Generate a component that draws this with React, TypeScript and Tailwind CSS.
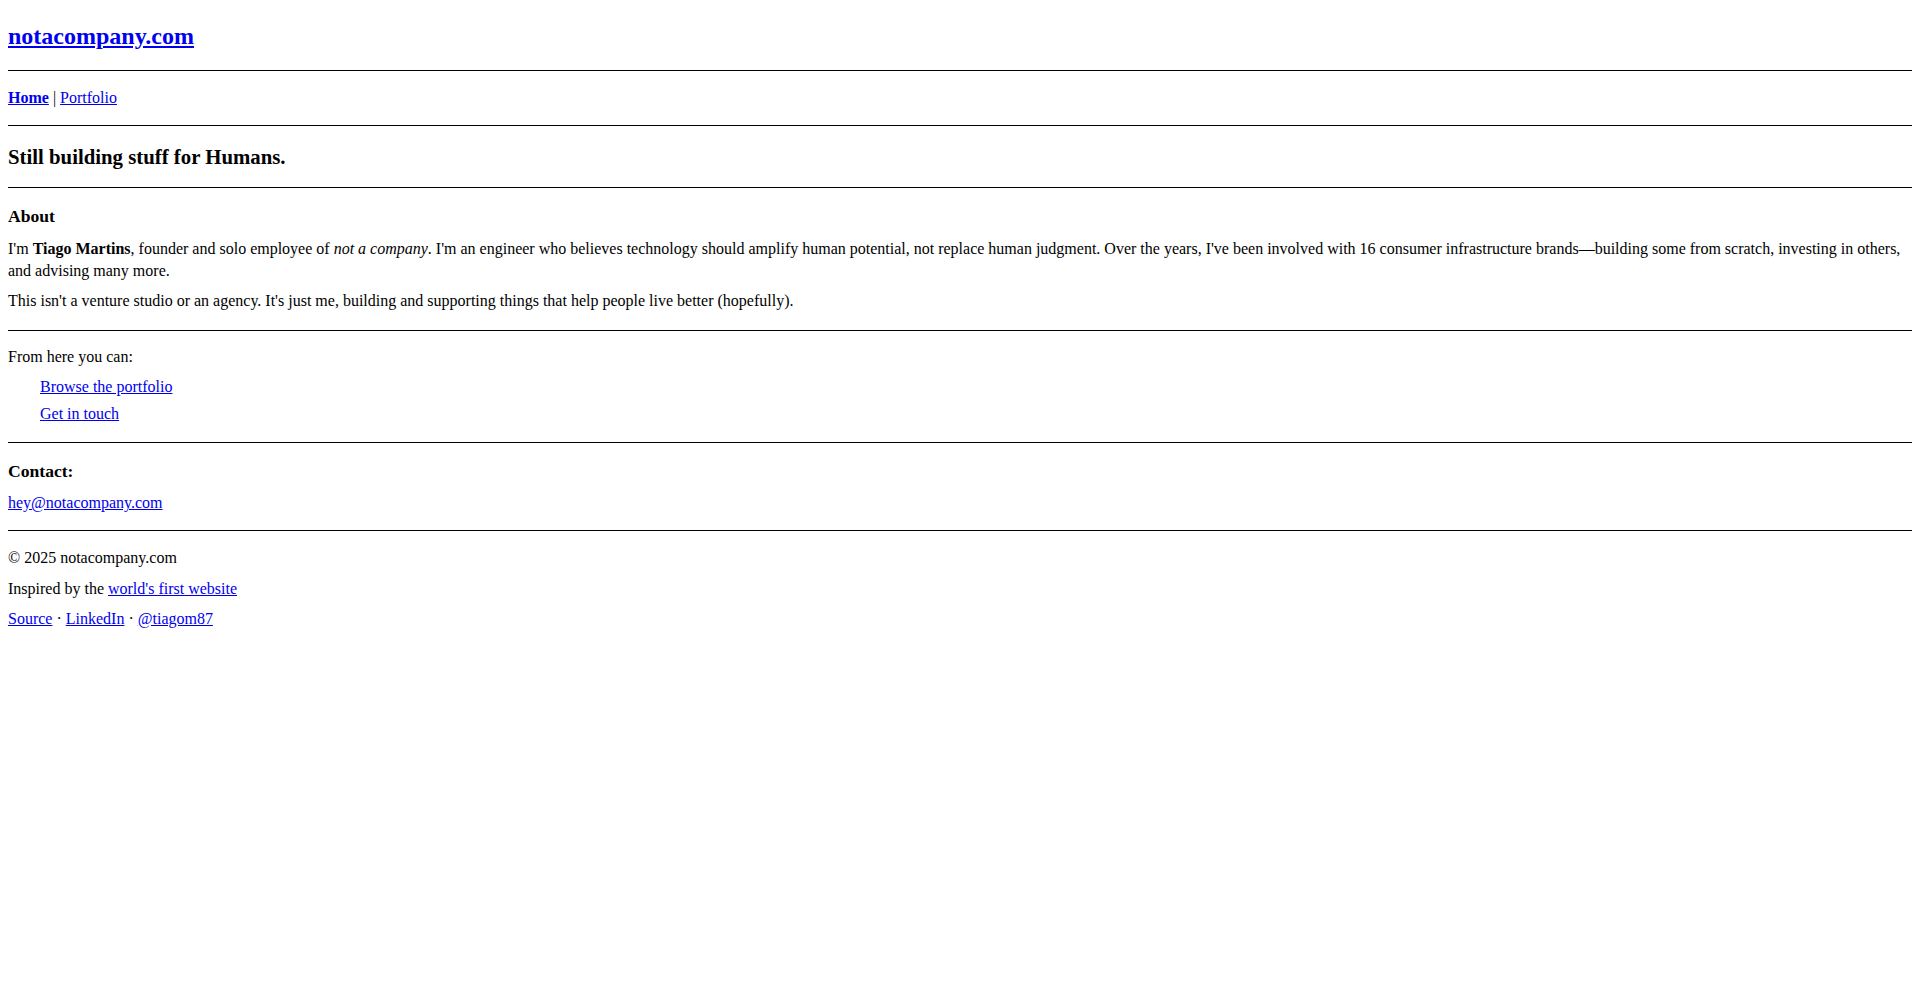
const link = 'text-[#0000ee] underline';

function Rule({ className = '' }: { className?: string }) {
  return <hr className={`border-0 border-t border-black ${className}`} />;
}

export default function App() {
  return (
    <div className="min-h-[993px] bg-white px-2 text-black font-['Liberation_Serif',serif] text-[16px]">
      <div className="pt-[20px]">
        <h1 className="text-[24px] leading-[32px] font-bold">
          <a href="#" className={link}>notacompany.com</a>
        </h1>
      </div>
      <Rule className="mt-[18px]" />

      <nav className="mt-[15px] leading-[24px]">
        <a href="#" className={`${link} font-bold`}>Home</a> | <a href="#" className={link}>Portfolio</a>
      </nav>
      <Rule className="mt-[15px]" />

      <h2 className="mt-[17px] text-[20.8px] leading-[28px] font-bold">Still building stuff for Humans.</h2>
      <Rule className="mt-[16px]" />

      <section>
        <h3 className="mt-[16px] text-[17.6px] leading-[24px] font-bold">About</h3>
        <p className="mt-[10px] leading-[22px]">
          I'm <strong>Tiago Martins</strong>, founder and solo employee of <em>not a company</em>. I'm an engineer who
          believes technology should amplify human potential, not replace human judgment. Over the years, I've been
          involved with 16 consumer infrastructure brands—building some from scratch, investing in others, and advising
          many more.
        </p>
        <p className="mt-[8px] leading-[22px]">
          This isn't a venture studio or an agency. It's just me, building and supporting things that help people live
          better (hopefully).
        </p>
      </section>
      <Rule className="mt-[18px]" />

      <p className="mt-[14px] leading-[24px]">From here you can:</p>
      <ul className="pl-8 leading-[24px]">
        <li className="mt-[6px]"><a href="#" className={link}>Browse the portfolio</a></li>
        <li className="mt-[3px]"><a href="#" className={link}>Get in touch</a></li>
      </ul>
      <Rule className="mt-[16px]" />

      <h3 className="mt-[16px] text-[17.6px] leading-[24px] font-bold">Contact:</h3>
      <p className="mt-[8px] leading-[24px]">
        <a href="#" className={link}>hey@notacompany.com</a>
      </p>
      <Rule className="mt-[15px]" />

      <footer className="leading-[24px]">
        <p className="mt-[15px]">© 2025 notacompany.com</p>
        <p className="mt-[7px]">
          Inspired by the <a href="#" className={link}>world's first website</a>
        </p>
        <p className="mt-[6px]">
          <a href="#" className={link}>Source</a> · <a href="#" className={link}>LinkedIn</a> ·{' '}
          <a href="#" className={link}>@tiagom87</a>
        </p>
      </footer>
    </div>
  );
}
